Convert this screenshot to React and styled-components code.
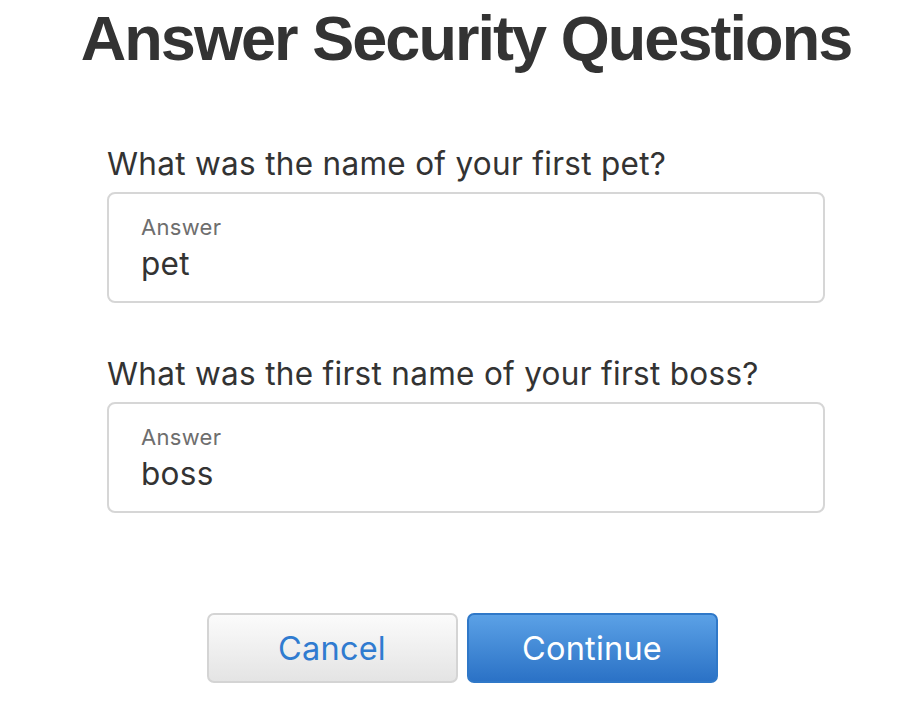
import React from "react";
import styled, { createGlobalStyle } from "styled-components";

const GlobalStyle = createGlobalStyle`
  html, body {
    margin: 0;
    padding: 0;
    background: #ffffff;
  }
  body {
    font-family: Inter, "Noto Sans", "Liberation Sans", sans-serif;
    color: #333333;
  }
`;

const questions = [
  { id: 1, text: "What was the name of your first pet?", answer: "pet" },
  { id: 2, text: "What was the first name of your first boss?", answer: "boss" },
];

export default function App() {
  return (
    <Page>
      <GlobalStyle />
      <Title>Answer Security Questions</Title>

      <Questions>
        {questions.map((q) => (
          <QuestionBlock key={q.id}>
            <QuestionText>{q.text}</QuestionText>
            <AnswerField>
              <FieldLabel>Answer</FieldLabel>
              <FieldValue>{q.answer}</FieldValue>
            </AnswerField>
          </QuestionBlock>
        ))}
      </Questions>

      <ButtonRow>
        <Button>Cancel</Button>
        <Button primary>Continue</Button>
      </ButtonRow>
    </Page>
  );
}

// page wrappers
const Page = styled.div`
  width: 718px;
  margin-left: 107px;
  display: flex;
  flex-direction: column;
  align-items: center;
  padding-top: 2px;
`;

const Title = styled.h1`
  margin: 0;
  font-family: "Liberation Sans", Arial, sans-serif;
  font-weight: 700;
  font-size: 63px;
  letter-spacing: -1.95px;
  line-height: 72px;
  color: #333333;
  white-space: nowrap;
`;

const Questions = styled.div`
  align-self: stretch;
  display: flex;
  flex-direction: column;
  gap: 52px;
  margin-top: 71px;
`;

const QuestionBlock = styled.div`
  display: flex;
  flex-direction: column;
  gap: 9px;
`;

const QuestionText = styled.div`
  font-size: 31.5px;
  letter-spacing: 0.3px;
  line-height: 38px;
  color: #333333;
  white-space: nowrap;
`;

const AnswerField = styled.div`
  box-sizing: border-box;
  height: 111px;
  border: 2px solid #d6d6d6;
  border-radius: 8px;
  padding: 20px 32px 0;
  display: flex;
  flex-direction: column;
  gap: 5px;
`;

const FieldLabel = styled.div`
  font-size: 22px;
  letter-spacing: 0.3px;
  line-height: 26px;
  color: #6e6e6e;
`;

const FieldValue = styled.div`
  font-size: 31.5px;
  letter-spacing: 0.3px;
  line-height: 38px;
  color: #333333;
`;

const ButtonRow = styled.div`
  display: flex;
  gap: 9px;
  margin-top: 100px;
  margin-right: 8px;
`;

const Button = styled.button`
  box-sizing: border-box;
  width: 251px;
  height: 70px;
  border-radius: 7px;
  font-family: Inter, "Noto Sans", sans-serif;
  font-size: 32.5px;
  letter-spacing: 0.2px;
  cursor: pointer;
  border: 2px solid ${(p) => (p.primary ? "#2f78c8" : "#d4d4d4")};
  color: ${(p) => (p.primary ? "#ffffff" : "#2f7bd0")};
  background: ${(p) =>
    p.primary
      ? "linear-gradient(#5ba1e6, #2b72c6)"
      : "linear-gradient(#fbfbfb, #e4e4e4)"};
`;
